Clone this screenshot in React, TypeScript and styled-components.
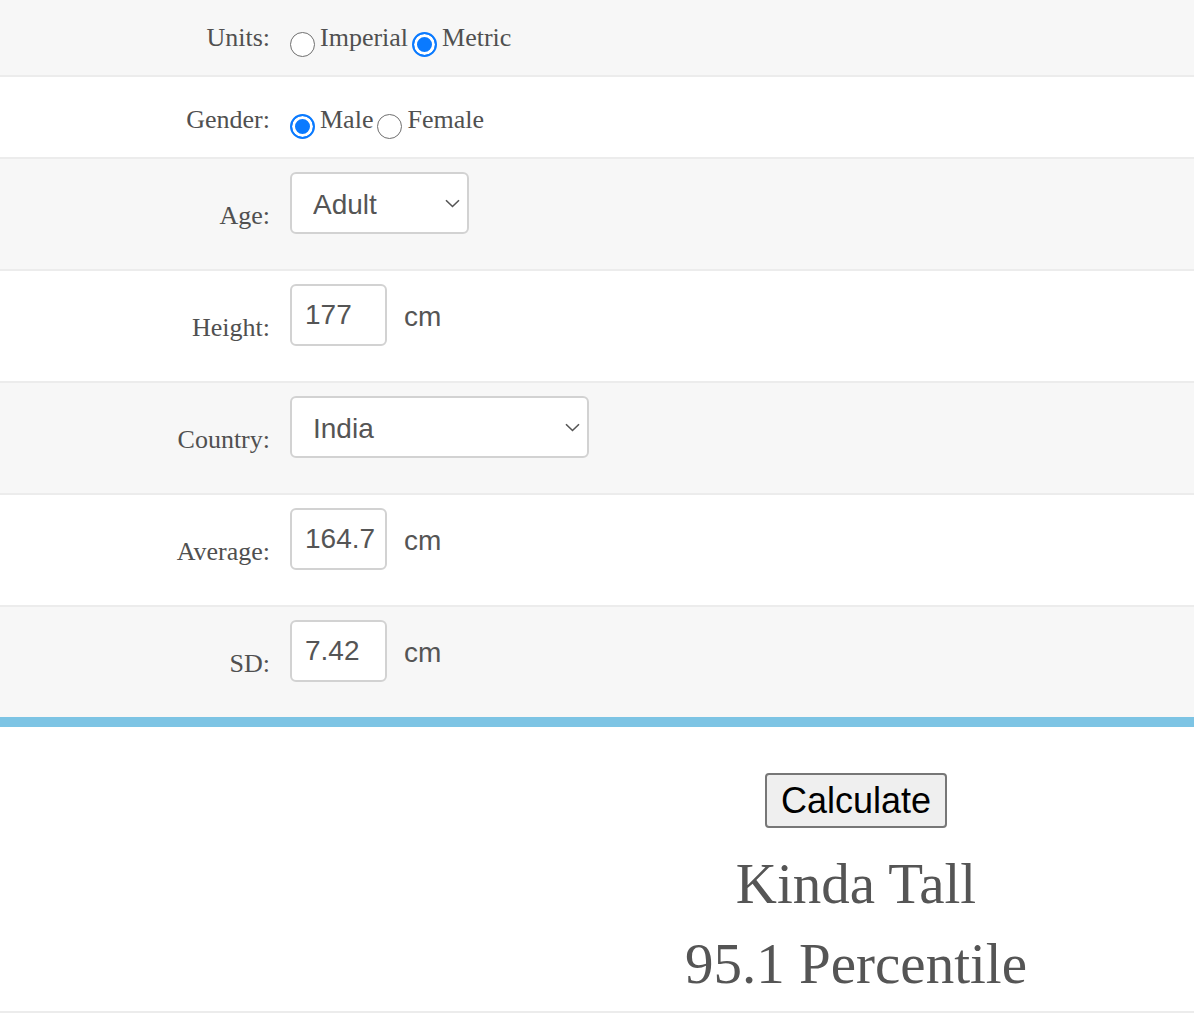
import React from "react";
import styled, { createGlobalStyle } from "styled-components";

const GlobalStyle = createGlobalStyle`
  html, body { margin: 0; padding: 0; background: #fff; }
  body { font-family: "Liberation Serif", "Times New Roman", serif; color: #555; }
`;

const Page = styled.main`
  width: 100%;
`;

const Row = styled.div<{ $alt?: boolean; $height: number; $padTop: number; $last?: boolean }>`
  display: grid;
  grid-template-columns: 270px 1fr;
  column-gap: 20px;
  align-items: start;
  box-sizing: border-box;
  height: ${(p) => p.$height}px;
  padding-top: ${(p) => p.$padTop}px;
  background: ${(p) => (p.$alt ? "#f7f7f7" : "#ffffff")};
  border-bottom: ${(p) => (p.$last ? "10px solid #7dc4e4" : "2px solid #ececec")};
`;

const FieldLabel = styled.label<{ $offset: number }>`
  font-size: 26px;
  line-height: 26px;
  text-align: right;
  color: #505050;
  margin-top: ${(p) => p.$offset}px;
`;

const RadioGroup = styled.div`
  display: flex;
  align-items: flex-start;
  gap: 4px;
`;

const RadioOption = styled.label`
  display: inline-flex;
  align-items: flex-start;
  gap: 5px;
  font-size: 26px;
  line-height: 26px;
  color: #505050;
  cursor: pointer;
`;

const Radio = styled.input.attrs({ type: "radio" })`
  appearance: none;
  -webkit-appearance: none;
  box-sizing: border-box;
  margin: 7px 0 0 0;
  width: 25px;
  height: 25px;
  border-radius: 50%;
  border: 1.5px solid #6f6f6f;
  background: #fff;
  flex: none;
  &:checked {
    border: 2.5px solid #0a7aff;
    background: #0a7aff;
    box-shadow: inset 0 0 0 3px #fff;
  }
`;

const Control = styled.div`
  display: flex;
  align-items: center;
  gap: 17px;
`;

const TextInput = styled.input`
  box-sizing: border-box;
  width: 97px;
  height: 62px;
  border: 2px solid #d2d2d2;
  border-radius: 6px;
  padding: 0 0 0 13px;
  font-family: "Liberation Sans", Arial, sans-serif;
  font-size: 28px;
  color: #555;
  background: #fff;
  outline: none;
`;

const Unit = styled.span`
  font-family: "Liberation Sans", Arial, sans-serif;
  font-size: 28px;
  color: #555;
  padding-top: 3px;
`;

const SelectWrap = styled.div<{ $width: number }>`
  position: relative;
  width: ${(p) => p.$width}px;
  height: 62px;
`;

const Select = styled.select`
  appearance: none;
  -webkit-appearance: none;
  box-sizing: border-box;
  width: 100%;
  height: 100%;
  border: 2px solid #d2d2d2;
  border-radius: 6px;
  padding: 2px 0 0 21px;
  font-family: "Liberation Sans", Arial, sans-serif;
  font-size: 28px;
  color: #555;
  background: #fff;
  outline: none;
`;

const Chevron = styled.svg`
  position: absolute;
  right: 9px;
  top: 27px;
  width: 15px;
  height: 9px;
  pointer-events: none;
`;

const ResultArea = styled.section`
  box-sizing: border-box;
  padding: 46px 0 7px 518px;
  display: flex;
  flex-direction: column;
  align-items: center;
  border-bottom: 2px solid #ececec;
`;

const CalcButton = styled.button`
  font-family: "Liberation Sans", Arial, sans-serif;
  font-size: 36px;
  line-height: 39px;
  color: #000;
  background: #efefef;
  border: 2px solid #777;
  border-radius: 4px;
  padding: 6px 14px;
  margin: 0 0 16px 0;
  cursor: pointer;
`;

const ResultLine = styled.div`
  font-size: 57px;
  line-height: 80px;
  color: #555;
  text-align: center;
  white-space: nowrap;
`;

const ChevronIcon = () => (
  <Chevron viewBox="0 0 15 9">
    <path d="M1 1.2 L7.5 7.5 L14 1.2" fill="none" stroke="#555" strokeWidth="1.6" />
  </Chevron>
);

export default function App() {
  return (
    <Page>
      <GlobalStyle />
      <Row $alt $height={77} $padTop={25}>
        <FieldLabel $offset={0}>Units:</FieldLabel>
        <RadioGroup>
          <RadioOption>
            <Radio name="units" value="imperial" />
            Imperial
          </RadioOption>
          <RadioOption>
            <Radio name="units" value="metric" defaultChecked />
            Metric
          </RadioOption>
        </RadioGroup>
      </Row>
      <Row $height={82} $padTop={30}>
        <FieldLabel $offset={0}>Gender:</FieldLabel>
        <RadioGroup>
          <RadioOption>
            <Radio name="gender" value="male" defaultChecked />
            Male
          </RadioOption>
          <RadioOption>
            <Radio name="gender" value="female" />
            Female
          </RadioOption>
        </RadioGroup>
      </Row>
      <Row $alt $height={112} $padTop={13}>
        <FieldLabel $offset={31}>Age:</FieldLabel>
        <Control>
          <SelectWrap $width={179}>
            <Select defaultValue="adult">
              <option value="adult">Adult</option>
              <option value="child">Child</option>
            </Select>
            <ChevronIcon />
          </SelectWrap>
        </Control>
      </Row>
      <Row $height={112} $padTop={13}>
        <FieldLabel $offset={31}>Height:</FieldLabel>
        <Control>
          <TextInput defaultValue="177" />
          <Unit>cm</Unit>
        </Control>
      </Row>
      <Row $alt $height={112} $padTop={13}>
        <FieldLabel $offset={31}>Country:</FieldLabel>
        <Control>
          <SelectWrap $width={299}>
            <Select defaultValue="india">
              <option value="india">India</option>
              <option value="usa">United States</option>
            </Select>
            <ChevronIcon />
          </SelectWrap>
        </Control>
      </Row>
      <Row $height={112} $padTop={13}>
        <FieldLabel $offset={31}>Average:</FieldLabel>
        <Control>
          <TextInput defaultValue="164.7" />
          <Unit>cm</Unit>
        </Control>
      </Row>
      <Row $alt $last $height={120} $padTop={13}>
        <FieldLabel $offset={31}>SD:</FieldLabel>
        <Control>
          <TextInput defaultValue="7.42" />
          <Unit>cm</Unit>
        </Control>
      </Row>
      <ResultArea>
        <CalcButton type="button">Calculate</CalcButton>
        <ResultLine>Kinda Tall</ResultLine>
        <ResultLine>95.1 Percentile</ResultLine>
      </ResultArea>
    </Page>
  );
}
